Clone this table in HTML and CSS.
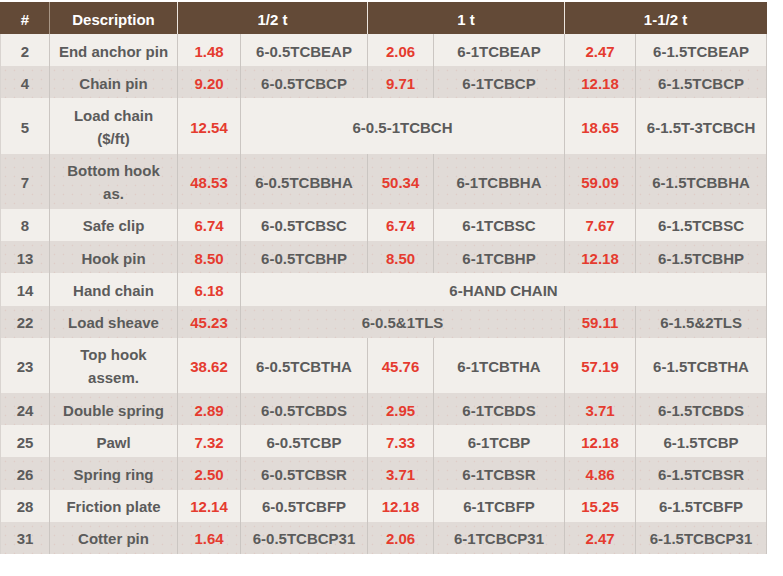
FILE: index.html
```html
<!DOCTYPE html>
<html>
<head>
<meta charset="utf-8">
<link rel="stylesheet" href="styles.css">
</head>
<body>
<table class="parts">
  <colgroup>
    <col class="c-num"><col class="c-desc">
    <col class="c-p1"><col class="c-k1">
    <col class="c-p2"><col class="c-k2">
    <col class="c-p3"><col class="c-k3">
  </colgroup>
  <thead>
    <tr>
      <th class="first">#</th>
      <th class="sep-dark">Description</th>
      <th colspan="2">1/2 t</th>
      <th colspan="2">1 t</th>
      <th colspan="2" class="last">1-1/2 t</th>
    </tr>
  </thead>
  <tbody>
    <tr><td>2</td><td>End anchor pin</td><td class="price">1.48</td><td>6-0.5TCBEAP</td><td class="price">2.06</td><td>6-1TCBEAP</td><td class="price">2.47</td><td>6-1.5TCBEAP</td></tr>
    <tr><td>4</td><td>Chain pin</td><td class="price">9.20</td><td>6-0.5TCBCP</td><td class="price">9.71</td><td>6-1TCBCP</td><td class="price">12.18</td><td>6-1.5TCBCP</td></tr>
    <tr><td>5</td><td>Load chain ($/ft)</td><td class="price">12.54</td><td colspan="3">6-0.5-1TCBCH</td><td class="price">18.65</td><td>6-1.5T-3TCBCH</td></tr>
    <tr><td>7</td><td>Bottom hook as.</td><td class="price">48.53</td><td>6-0.5TCBBHA</td><td class="price">50.34</td><td>6-1TCBBHA</td><td class="price">59.09</td><td>6-1.5TCBBHA</td></tr>
    <tr><td>8</td><td>Safe clip</td><td class="price">6.74</td><td>6-0.5TCBSC</td><td class="price">6.74</td><td>6-1TCBSC</td><td class="price">7.67</td><td>6-1.5TCBSC</td></tr>
    <tr><td>13</td><td>Hook pin</td><td class="price">8.50</td><td>6-0.5TCBHP</td><td class="price">8.50</td><td>6-1TCBHP</td><td class="price">12.18</td><td>6-1.5TCBHP</td></tr>
    <tr><td>14</td><td>Hand chain</td><td class="price">6.18</td><td colspan="5">6-HAND CHAIN</td></tr>
    <tr><td>22</td><td>Load sheave</td><td class="price">45.23</td><td colspan="3">6-0.5&amp;1TLS</td><td class="price">59.11</td><td>6-1.5&amp;2TLS</td></tr>
    <tr><td>23</td><td>Top hook assem.</td><td class="price">38.62</td><td>6-0.5TCBTHA</td><td class="price">45.76</td><td>6-1TCBTHA</td><td class="price">57.19</td><td>6-1.5TCBTHA</td></tr>
    <tr><td>24</td><td>Double spring</td><td class="price">2.89</td><td>6-0.5TCBDS</td><td class="price">2.95</td><td>6-1TCBDS</td><td class="price">3.71</td><td>6-1.5TCBDS</td></tr>
    <tr><td>25</td><td>Pawl</td><td class="price">7.32</td><td>6-0.5TCBP</td><td class="price">7.33</td><td>6-1TCBP</td><td class="price">12.18</td><td>6-1.5TCBP</td></tr>
    <tr><td>26</td><td>Spring ring</td><td class="price">2.50</td><td>6-0.5TCBSR</td><td class="price">3.71</td><td>6-1TCBSR</td><td class="price">4.86</td><td>6-1.5TCBSR</td></tr>
    <tr><td>28</td><td>Friction plate</td><td class="price">12.14</td><td>6-0.5TCBFP</td><td class="price">12.18</td><td>6-1TCBFP</td><td class="price">15.25</td><td>6-1.5TCBFP</td></tr>
    <tr><td>31</td><td>Cotter pin</td><td class="price">1.64</td><td>6-0.5TCBCP31</td><td class="price">2.06</td><td>6-1TCBCP31</td><td class="price">2.47</td><td>6-1.5TCBCP31</td></tr>
  </tbody>
</table>
</body>
</html>
```

FILE: styles.css
```css
html, body {
  margin: 0;
  padding: 0;
  background: #ffffff;
}

body {
  padding-top: 2px;
  font-family: "Liberation Sans", Arial, sans-serif;
}

.parts {
  table-layout: fixed;
  width: 767px;
  border-collapse: separate;
  border-spacing: 0;
  font-size: 15px;
  font-weight: bold;
}

.c-num { width: 49px; }
.c-desc { width: 128px; }
.c-p1 { width: 63px; }
.c-k1 { width: 127px; }
.c-p2 { width: 66px; }
.c-k2 { width: 131px; }
.c-p3 { width: 71px; }
.c-k3 { width: 132px; }

.parts th,
.parts td {
  text-align: center;
  vertical-align: middle;
  line-height: 23px;
  padding: 5.6px 8px 3.64px;
  border-left: 1px solid #cbc6c2;
}

.parts th {
  background: #634a37;
  color: #ffffff;
  padding: 6px 4px 3px;
  border-left-color: #ece5de;
}

.parts th.first {
  border-left-color: #634a37;
}

.parts th.sep-dark {
  border-left-color: #a89685;
}

.parts th.last,
.parts td:last-child {
  border-right: 1px solid #cbc6c2;
}

.parts th.last {
  border-right-color: #634a37;
}

.parts td {
  color: #5b5b5b;
}

.parts td:first-child {
  border-left-color: #d9d4d0;
  padding-left: 4px;
  padding-right: 4px;
}

.parts td.price {
  color: #e53b2f;
  padding-left: 4px;
  padding-right: 4px;
}

.parts tbody tr:nth-child(odd) td {
  background: #f2efeb;
}

.parts tbody tr:nth-child(even) td {
  background-color: #e1dbd7;
  background-image: radial-gradient(circle, rgba(214, 140, 128, 0.18) 0.7px, transparent 1.1px);
  background-size: 9px 9px;
}
```
